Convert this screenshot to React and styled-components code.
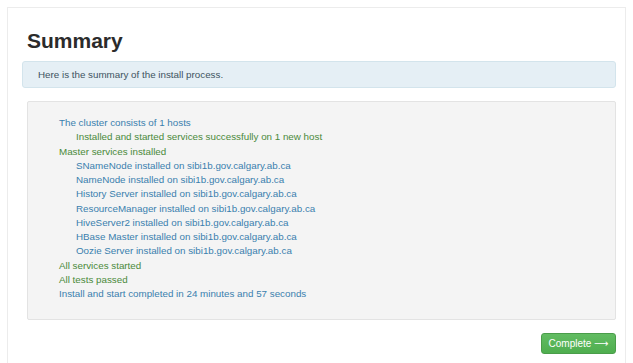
import styled, { createGlobalStyle } from "styled-components";

const GlobalStyle = createGlobalStyle`
  html, body {
    margin: 0;
    background: #ffffff;
    font-family: "Liberation Sans", Arial, sans-serif;
  }
`;

const lines = [
  { text: "The cluster consists of 1 hosts", level: 0, tone: "info" },
  { text: "Installed and started services successfully on 1 new host", level: 1, tone: "ok" },
  { text: "Master services installed", level: 0, tone: "ok" },
  { text: "SNameNode installed on sibi1b.gov.calgary.ab.ca", level: 1, tone: "info" },
  { text: "NameNode installed on sibi1b.gov.calgary.ab.ca", level: 1, tone: "info" },
  { text: "History Server installed on sibi1b.gov.calgary.ab.ca", level: 1, tone: "info" },
  { text: "ResourceManager installed on sibi1b.gov.calgary.ab.ca", level: 1, tone: "info" },
  { text: "HiveServer2 installed on sibi1b.gov.calgary.ab.ca", level: 1, tone: "info" },
  { text: "HBase Master installed on sibi1b.gov.calgary.ab.ca", level: 1, tone: "info" },
  { text: "Oozie Server installed on sibi1b.gov.calgary.ab.ca", level: 1, tone: "info" },
  { text: "All services started", level: 0, tone: "ok" },
  { text: "All tests passed", level: 0, tone: "ok" },
  { text: "Install and start completed in 24 minutes and 57 seconds", level: 0, tone: "info" },
];

const App = () => {
  return (
    <>
      <GlobalStyle />
      <Panel>
        <Title>Summary</Title>
        <Alert>Here is the summary of the install process.</Alert>
        <Well>
          {lines.map((line, i) => (
            <Line key={i} $level={line.level} $tone={line.tone}>
              {line.text}
            </Line>
          ))}
        </Well>
        <Footer>
          <Button>
            Complete <Arrow>&#x27F6;</Arrow>
          </Button>
        </Footer>
      </Panel>
    </>
  );
};

export default App;

const Panel = styled.div`
  margin: 7px 7px 0 7px;
  height: 356px;
  box-sizing: border-box;
  border: 1px solid #ececec;
  border-bottom: none;
  padding: 0 9px 0 14px;
`;

const Title = styled.h2`
  margin: 0;
  padding: 20px 0 0 5px;
  height: 33px;
  font-size: 21px;
  font-weight: bold;
  line-height: 26px;
  color: #2b2b2b;
`;

const Alert = styled.div`
  height: 27px;
  box-sizing: border-box;
  display: flex;
  align-items: center;
  padding: 0 15px;
  background: #e5eff5;
  border: 1px solid #d3e4ec;
  border-radius: 3px;
  font-size: 9.8px;
  color: #3e5461;
`;

const Well = styled.div`
  margin: 13px 0 0 5px;
  height: 219px;
  box-sizing: border-box;
  padding: 14px 0 0 31px;
  background: #f4f4f4;
  border: 1px solid #e3e3e3;
  border-radius: 2px;
`;

const Line = styled.div`
  padding-left: ${(p) => p.$level * 17}px;
  font-size: 9.8px;
  line-height: 14.25px;
  color: ${(p) => (p.$tone === "ok" ? "#4a8a3a" : "#3a7fae")};
  white-space: nowrap;
`;

const Footer = styled.div`
  display: flex;
  justify-content: flex-end;
  padding-top: 13px;
`;

const Button = styled.button`
  width: 75px;
  height: 21px;
  padding: 0;
  border: 1px solid #4a9d4a;
  border-radius: 3px;
  background: linear-gradient(#62bc62, #4fae4f);
  color: #ffffff;
  font-family: "Liberation Sans", Arial, sans-serif;
  font-size: 10px;
  cursor: pointer;
`;

const Arrow = styled.span`
  font-family: "DejaVu Sans", sans-serif;
  font-size: 10px;
`;
